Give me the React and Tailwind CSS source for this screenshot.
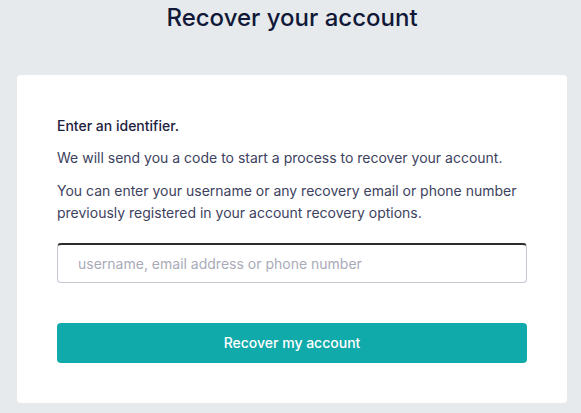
export default function App() {
  return (
    <div className="min-h-[413px] bg-[#e6eaed] pl-[17px] pr-[14px] font-['Inter',sans-serif]">
      <h1 className="text-center text-[24px] leading-[36px] font-medium text-[#111838]">
        Recover your account
      </h1>

      <div className="mt-[39px] bg-white rounded-[4px] p-10 text-[14px] leading-[22px] text-[#3d4260]">
        <p className="font-medium text-[#1c2140]">Enter an identifier.</p>
        <p className="mt-[10px]">
          We will send you a code to start a process to recover your account.
        </p>
        <p className="mt-[11px]">
          You can enter your username or any recovery email or phone number
          previously registered in your account recovery options.
        </p>

        <input
          type="text"
          placeholder="username, email address or phone number"
          className="mt-[19px] block w-full h-[40px] rounded-[4px] border border-[#c6c8d2] border-t-2 border-t-[#2b2b2b] px-[20px] text-[14px] text-[#3d4260] placeholder:text-[#a9abb8] outline-none"
        />

        <button className="mt-10 block w-full h-[40px] rounded-[4px] bg-[#11aaaa] text-white text-[14px] font-medium">
          Recover my account
        </button>
      </div>
    </div>
  );
}
